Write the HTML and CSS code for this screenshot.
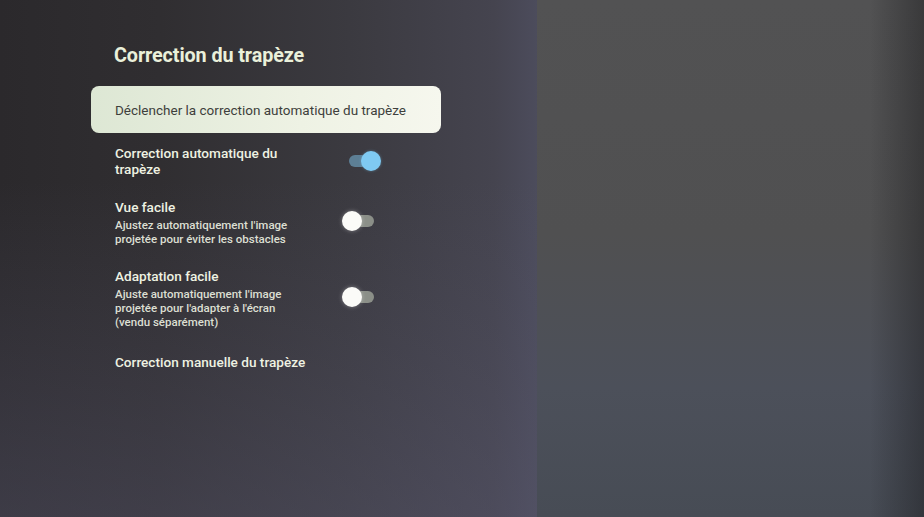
FILE: index.html
```html
<!DOCTYPE html>
<html lang="fr">
<head>
<meta charset="utf-8">
<link rel="stylesheet" href="styles.css">
</head>
<body>
<div class="screen">
  <section class="menu">
    <h1 class="title">Correction du trapèze</h1>
    <div class="card">Déclencher la correction automatique du trapèze</div>
    <div class="row r1">
      <div class="text">
        <div class="label">Correction automatique du<br>trapèze</div>
      </div>
      <div class="toggle on"><span class="track"></span><span class="knob"></span></div>
    </div>
    <div class="row r2">
      <div class="text">
        <div class="label">Vue facile</div>
        <div class="sub">Ajustez automatiquement l'image<br>projetée pour éviter les obstacles</div>
      </div>
      <div class="toggle"><span class="track"></span><span class="knob"></span></div>
    </div>
    <div class="row r3">
      <div class="text">
        <div class="label">Adaptation facile</div>
        <div class="sub">Ajuste automatiquement l'image<br>projetée pour l'adapter à l'écran<br>(vendu séparément)</div>
      </div>
      <div class="toggle"><span class="track"></span><span class="knob"></span></div>
    </div>
    <div class="row r4">
      <div class="text">
        <div class="label">Correction manuelle du trapèze</div>
      </div>
    </div>
  </section>
  <section class="side"></section>
</div>
</body>
</html>
```

FILE: styles.css
```css
html, body {
  margin: 0;
  padding: 0;
  width: 924px;
  height: 517px;
  overflow: hidden;
  background: #2e2c30;
}

.screen {
  display: flex;
  width: 924px;
  height: 517px;
  font-family: Roboto, "Liberation Sans", sans-serif;
}

.menu {
  width: 537px;
  flex: none;
  box-sizing: border-box;
  padding: 44px 0 0 91px;
  background:
    linear-gradient(180deg, rgba(80,80,100,0) 0%, rgba(80,80,100,0) 35%, rgba(88,87,110,0.4) 100%),
    linear-gradient(90deg, #2b292c 0%, #302e31 30%, #3b3a40 65%, #45444f 92%, #4c4c5c 100%);
}

.title {
  margin: 0 0 0 23px;
  font-size: 19.8px;
  line-height: 24px;
  font-weight: 700;
  color: #eaf0da;
  letter-spacing: -0.1px;
}

.card {
  margin-top: 18px;
  width: 350px;
  height: 47px;
  box-sizing: border-box;
  padding-left: 24px;
  display: flex;
  align-items: center;
  border-radius: 8px;
  background: linear-gradient(90deg, #dde7d4 0%, #eef2e4 60%, #f6f7ee 100%);
  color: #3e3f3c;
  font-size: 13.5px;
}

.row {
  display: flex;
  align-items: center;
  padding-left: 24px;
}

.r1 { margin-top: 12px; }
.r2 { margin-top: 22px; }
.r3 { margin-top: 22px; }
.r4 { margin-top: 25px; }

.text {
  width: 227px;
  flex: none;
}

.label {
  font-size: 13.6px;
  line-height: 16px;
  font-weight: 500;
  color: #eef2e2;
}

.sub {
  margin-top: 3px;
  font-size: 11.5px;
  line-height: 14px;
  font-weight: 500;
  color: #dcdfd2;
}

.toggle {
  position: relative;
  width: 39px;
  height: 20px;
  flex: none;
}

.r2 .toggle, .r3 .toggle { margin-top: -3px; }

.track {
  position: absolute;
  left: 7px;
  top: 4px;
  width: 25px;
  height: 12px;
  border-radius: 6px;
  background: #8b8f88;
}

.knob {
  position: absolute;
  left: 0;
  top: 0;
  width: 20px;
  height: 20px;
  border-radius: 50%;
  background: #fbfbf8;
  box-shadow: 0 0 4px rgba(255,255,255,0.35);
}

.toggle.on .track {
  background: #5d7f95;
}

.toggle.on .knob {
  left: 19px;
  background: #7fcaf2;
  box-shadow: 0 0 3px rgba(127,202,242,0.4);
}

.side {
  flex: 1;
  background:
    linear-gradient(90deg, rgba(0,0,0,0) 0%, rgba(0,0,0,0) 86%, rgba(20,20,22,0.4) 100%),
    linear-gradient(180deg, #525253 0%, #505051 45%, #4c505a 75%, #474c55 100%);
}
```
